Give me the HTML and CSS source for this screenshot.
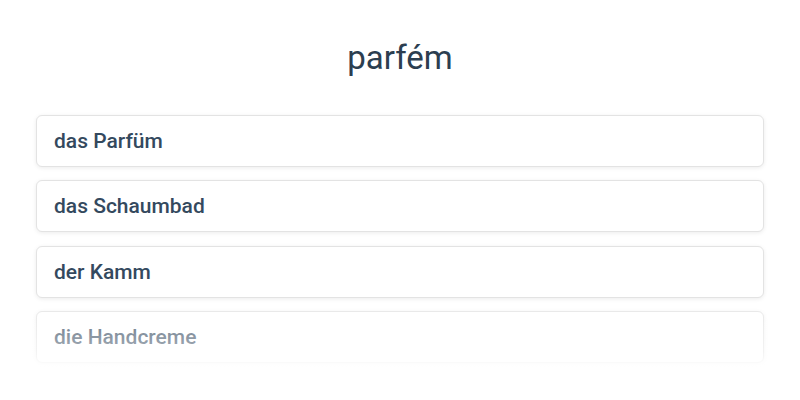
FILE: index.html
```html
<!DOCTYPE html>
<html lang="en">
<head>
  <meta charset="UTF-8" />
  <meta name="viewport" content="width=device-width, initial-scale=1.0" />
  <title>parfém</title>
  <link rel="stylesheet" href="styles.css">
</head>
<body>
  <div class="quiz">
    <h1 class="word">parfém</h1>
    <div class="options">
      <div class="option">das Parfüm</div>
      <div class="option">das Schaumbad</div>
      <div class="option">der Kamm</div>
      <div class="option">die Handcreme</div>
      <div class="fade"></div>
    </div>
  </div>
</body>
</html>
```

FILE: styles.css
```css
* { box-sizing: border-box; }
body {
  margin: 0;
  font-family: Roboto, 'Liberation Sans', sans-serif;
  background: #ffffff;
  color: #2c3e50;
}
.quiz {
  padding: 37px 36px 0;
}
.word {
  margin: 0 0 37px;
  text-align: center;
  font-size: 33px;
  line-height: 41px;
  font-weight: 400;
  color: #2c3e50;
}
.options {
  position: relative;
  display: flex;
  flex-direction: column;
  gap: 13.3px;
  padding: 0 0 6px;
}
.option {
  height: 52px;
  display: flex;
  align-items: center;
  padding: 0 17px;
  background: #fff;
  border: 1px solid #e3e3e3;
  border-radius: 6px;
  box-shadow: 0 1px 4px rgba(0, 0, 0, 0.08);
  font-size: 21px;
  font-weight: 500;
  color: #34495e;
}
.fade {
  position: absolute;
  left: -4px;
  right: -4px;
  bottom: 0;
  height: 60px;
  background: linear-gradient(to bottom, rgba(255, 255, 255, 0.2), rgba(255, 255, 255, 0.55) 70%, #ffffff);
}
```
